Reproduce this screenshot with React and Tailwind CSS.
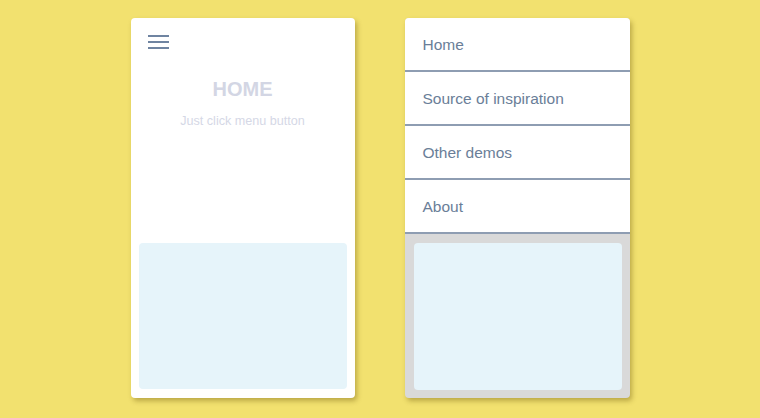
export default function App() {
    const items = ['Home', 'Source of inspiration', 'Other demos', 'About']

    return (
        <div className="w-[760px] h-[418px] bg-[#f2e16f] flex justify-center gap-[50px] pt-[18px] font-['Liberation_Sans',Arial,sans-serif]">
            <div className="w-[224px] h-[380px] bg-white rounded-[4px] shadow-[2px_3px_5px_rgba(120,100,20,0.45)] flex flex-col">
                <div className="h-[225px] flex flex-col">
                    <div className="pl-[17px] pt-[17px]">
                        <div className="w-[21px] flex flex-col gap-[4px]">
                            <div className="h-[2px] bg-[#6f84a1]" />
                            <div className="h-[2px] bg-[#6f84a1]" />
                            <div className="h-[2px] bg-[#6f84a1]" />
                        </div>
                    </div>
                    <h1 className="text-center text-[20px] font-bold text-[#d3d6e4] mt-[28px] leading-[24px]">HOME</h1>
                    <p className="text-center text-[12.6px] text-[#d5d8e6] mt-[11px]">Just click menu button</p>
                </div>
                <div className="mx-[8px] mb-[9px] flex-1 bg-[#e6f4fa] rounded-[4px]" />
            </div>

            <div className="w-[225px] h-[380px] bg-[#d9d9d9] rounded-[4px] shadow-[2px_3px_5px_rgba(120,100,20,0.45)] flex flex-col overflow-hidden">
                {items.map((item) => (
                    <div
                        key={item}
                        className="h-[54px] bg-white border-b-2 border-[#8e9db2] flex items-center pl-[18px] pt-[1px] text-[15.5px] text-[#6a7e98]"
                    >
                        {item}
                    </div>
                ))}
                <div className="ml-[9px] mr-[8px] mt-[9px] mb-[8px] flex-1 bg-[#e6f4fa] rounded-[4px]" />
            </div>
        </div>
    )
}
